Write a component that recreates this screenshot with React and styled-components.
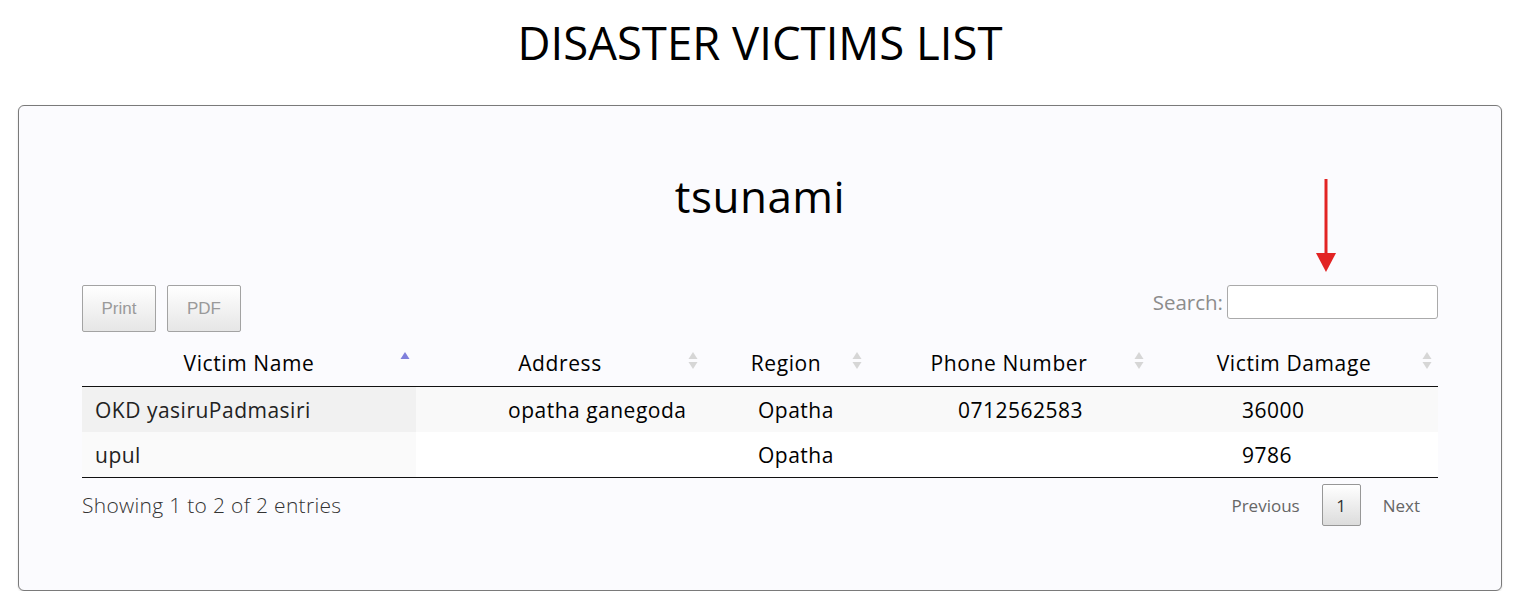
import React from 'react';
import styled, { createGlobalStyle } from 'styled-components';

const GlobalStyle = createGlobalStyle`
  body {
    margin: 0;
    background: #ffffff;
    font-family: "Open Sans", "Liberation Sans", sans-serif;
  }
`;

const Page = styled.div`
  padding: 0 16px 0 18px;
`;

const Title = styled.h1`
  margin: 0;
  padding: 12px 0 0;
  height: 105px;
  box-sizing: border-box;
  text-align: center;
  font-size: 45.5px;
  line-height: 60px;
  font-weight: 400;
  color: #000;
`;

const Card = styled.div`
  position: relative;
  border: 1px solid #7a7a7a;
  border-radius: 6px;
  background: #fbfbfe;
  padding: 62px 63px 64px;
  box-shadow: 0 1px 2px rgba(0, 0, 0, 0.15);
`;

const Heading = styled.h2`
  margin: 0 0 61px;
  text-align: center;
  font-size: 44px;
  line-height: 56px;
  letter-spacing: 0.5px;
  font-weight: 400;
  color: #000;
`;

const Toolbar = styled.div`
  display: flex;
  justify-content: space-between;
  align-items: flex-start;
  margin-bottom: 7px;
`;

const ButtonGroup = styled.div`
  display: flex;
  gap: 11px;
`;

const ExportButton = styled.button`
  width: 74px;
  height: 47px;
  border: 1px solid #a3a3a3;
  border-radius: 2px;
  background: linear-gradient(to bottom, #ffffff 0%, #e6e6e6 100%);
  font-family: "Liberation Sans", Arial, sans-serif;
  font-size: 17px;
  color: #9a9a9a;
  cursor: pointer;
`;

const SearchLabel = styled.label`
  display: flex;
  align-items: center;
  gap: 4px;
  font-size: 20.5px;
  color: #8c8c8c;
`;

const SearchInput = styled.input`
  width: 211px;
  height: 34px;
  box-sizing: border-box;
  border: 1px solid #aaaaaa;
  border-radius: 3px;
  background: #fff;
`;

const Arrow = styled.svg`
  position: absolute;
  left: 1296px;
  top: 73px;
`;

const Table = styled.table`
  width: 100%;
  border-collapse: collapse;
  table-layout: fixed;
  border-bottom: 1px solid #111;
`;

const Th = styled.th`
  position: relative;
  padding: 0 18px;
  height: 47px;
  font-size: 21px;
  letter-spacing: 0.6px;
  font-weight: 500;
  color: #000;
  text-align: center;
  border-bottom: 1px solid #111;
`;

const SortIcon = styled.svg`
  position: absolute;
  right: 6px;
  top: 12px;
`;

const Row = styled.tr`
  background: ${p => (p.$odd ? '#f9f9f9' : '#ffffff')};
  & + & td {
    border-top: 1px solid #dddddd;
  }
`;

const Td = styled.td`
  height: 45px;
  padding: 0 0 0 ${p => p.$indent}px;
  font-size: 21px;
  letter-spacing: 0.5px;
  line-height: 24px;
  font-weight: ${p => (p.$sorted ? 400 : 500)};
  color: ${p => (p.$sorted ? '#222' : '#000')};
  background: ${p => (p.$sorted ? (p.$odd ? '#f1f1f1' : '#fafafa') : 'transparent')};
  white-space: nowrap;
`;

const Footer = styled.div`
  display: flex;
  justify-content: space-between;
  align-items: center;
  margin-top: 6px;
`;

const Info = styled.div`
  font-size: 21px;
  letter-spacing: 0.3px;
  font-weight: 300;
  color: #333;
`;

const Pager = styled.div`
  display: flex;
  align-items: center;
  gap: 4px;
`;

const PageLink = styled.span`
  padding: 0 18px;
  font-size: 17px;
  color: #666;
`;

const PageCurrent = styled.span`
  width: 39px;
  height: 42px;
  box-sizing: border-box;
  display: flex;
  align-items: center;
  justify-content: center;
  border: 1px solid #979797;
  border-radius: 2px;
  background: linear-gradient(to bottom, #ffffff 0%, #dcdcdc 100%);
  font-size: 17px;
  color: #333;
`;

const columns = [
  { name: 'Victim Name', width: 334, indent: 13, sort: 'asc' },
  { name: 'Address', width: 288, indent: 92, sort: 'both' },
  { name: 'Region', width: 164, indent: 54, sort: 'both' },
  { name: 'Phone Number', width: 282, indent: 90, sort: 'both' },
  { name: 'Victim Damage', width: 288, indent: 92, sort: 'both' },
];

const rows = [
  ['OKD yasiruPadmasiri', 'opatha ganegoda', 'Opatha', '0712562583', '36000'],
  ['upul', '', 'Opatha', '', '9786'],
];

const Sort = ({ type }) => (
  <SortIcon width="10" height="20" viewBox="0 0 10 20">
    <polygon points="5,1 9.5,8 0.5,8" fill={type === 'asc' ? '#7f7fdc' : '#d6d6d6'} />
    {type === 'both' && <polygon points="0.5,11 9.5,11 5,18" fill="#d6d6d6" />}
  </SortIcon>
);

const App = () => {
  return (
    <Page>
      <GlobalStyle />
      <Title>DISASTER VICTIMS LIST</Title>
      <Card>
        <Heading>tsunami</Heading>
        <Arrow width="22" height="94" viewBox="0 0 22 94">
          <line x1="11" y1="0" x2="11" y2="78" stroke="#e22424" strokeWidth="3" />
          <polygon points="1,74 21,74 11,93" fill="#e22424" />
        </Arrow>
        <Toolbar>
          <ButtonGroup>
            <ExportButton>Print</ExportButton>
            <ExportButton>PDF</ExportButton>
          </ButtonGroup>
          <SearchLabel>
            Search:
            <SearchInput type="search" />
          </SearchLabel>
        </Toolbar>
        <Table>
          <colgroup>
            {columns.map(c => (
              <col key={c.name} style={{ width: c.width }} />
            ))}
          </colgroup>
          <thead>
            <tr>
              {columns.map(c => (
                <Th key={c.name}>
                  {c.name}
                  <Sort type={c.sort} />
                </Th>
              ))}
            </tr>
          </thead>
          <tbody>
            {rows.map((r, i) => (
              <Row key={i} $odd={i % 2 === 0}>
                {r.map((cell, j) => (
                  <Td key={j} $indent={columns[j].indent} $sorted={j === 0} $odd={i % 2 === 0}>
                    {cell}
                  </Td>
                ))}
              </Row>
            ))}
          </tbody>
        </Table>
        <Footer>
          <Info>Showing 1 to 2 of 2 entries</Info>
          <Pager>
            <PageLink>Previous</PageLink>
            <PageCurrent>1</PageCurrent>
            <PageLink>Next</PageLink>
          </Pager>
        </Footer>
      </Card>
    </Page>
  );
};

export default App;
